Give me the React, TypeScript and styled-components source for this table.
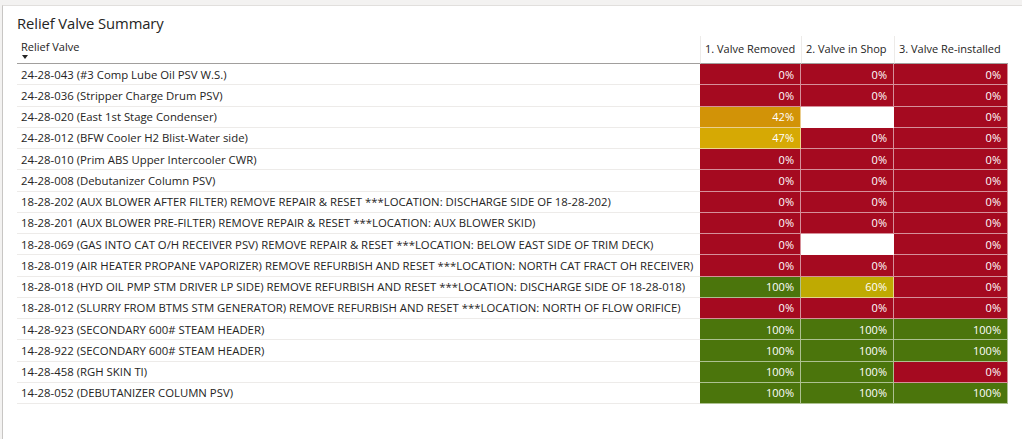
import { Fragment } from 'react';
import styled, { createGlobalStyle } from 'styled-components';

const GlobalStyle = createGlobalStyle`
  html, body {
    margin: 0;
    padding: 0;
    background: #f3f2f1;
  }
  body {
    font-family: 'Open Sans', 'Noto Sans', sans-serif;
    color: #252423;
  }
`;

const Page = styled.div`
  width: 1022px;
  height: 439px;
  padding: 5px 0 0 2px;
  box-sizing: border-box;
  overflow: hidden;
`;

const Visual = styled.div`
  height: 100%;
  background: #fff;
  border-top: 1px solid #e1dfdd;
  border-left: 1px solid #c8c6c4;
  padding: 7px 0 0 14px;
  box-sizing: border-box;
`;

const Title = styled.h1`
  margin: 0;
  font-size: 14.8px;
  font-weight: 400;
  line-height: 20px;
  color: #252423;
  letter-spacing: -0.1px;
`;

const Table = styled.div`
  margin-top: 3px;
  display: grid;
  grid-template-columns: 683px 101px 93px 114px;
  font-size: 11px;
`;

const HeaderCell = styled.div<{ $first?: boolean }>`
  height: 28px;
  box-sizing: border-box;
  border-bottom: 1px solid #a19f9d;
  border-left: ${({ $first }) => ($first ? 'none' : '1px solid #edebe9')};
  padding: ${({ $first }) => ($first ? '3px 0 0 4px' : '5px 0 0 4px')};
  white-space: nowrap;
  color: #252423;
  line-height: 15px;
`;

const SortArrow = styled.div`
  width: 0;
  height: 0;
  margin: 1px 0 0 1px;
  border-left: 3.5px solid transparent;
  border-right: 3.5px solid transparent;
  border-top: 4px solid #252423;
`;

const LabelCell = styled.div`
  height: 21.25px;
  box-sizing: border-box;
  border-bottom: 1px solid #edebe9;
  padding: 0 0 0 4px;
  display: flex;
  align-items: center;
  white-space: nowrap;
  overflow: hidden;
  font-size: 11.35px;
`;

const ValueCell = styled.div<{ $bg: string }>`
  height: 21.25px;
  box-sizing: border-box;
  background: ${({ $bg }) => $bg};
  border-right: 1px solid rgba(255, 255, 255, 0.55);
  border-bottom: 1px solid rgba(255, 255, 255, 0.55);
  padding-right: 6px;
  display: flex;
  align-items: center;
  justify-content: flex-end;
  color: #fff;
`;

const RED = '#a50a20';
const GREEN = '#4b750c';

type Val = { v: string; c: string } | null;

const r: Val = { v: '0%', c: RED };
const g: Val = { v: '100%', c: GREEN };

const rows: { label: string; vals: Val[] }[] = [
  { label: '24-28-043 (#3 Comp Lube Oil PSV W.S.)', vals: [r, r, r] },
  { label: '24-28-036 (Stripper Charge Drum PSV)', vals: [r, r, r] },
  { label: '24-28-020 (East 1st Stage Condenser)', vals: [{ v: '42%', c: '#d29307' }, null, r] },
  { label: '24-28-012 (BFW Cooler H2 Blist-Water side)', vals: [{ v: '47%', c: '#d6a904' }, r, r] },
  { label: '24-28-010 (Prim ABS Upper Intercooler CWR)', vals: [r, r, r] },
  { label: '24-28-008 (Debutanizer Column PSV)', vals: [r, r, r] },
  {
    label:
      '18-28-202 (AUX BLOWER AFTER FILTER) REMOVE REPAIR & RESET ***LOCATION: DISCHARGE SIDE OF 18-28-202)',
    vals: [r, r, r],
  },
  {
    label: '18-28-201 (AUX BLOWER PRE-FILTER) REMOVE REPAIR & RESET ***LOCATION: AUX BLOWER SKID)',
    vals: [r, r, r],
  },
  {
    label:
      '18-28-069 (GAS INTO CAT O/H RECEIVER PSV) REMOVE REPAIR & RESET ***LOCATION: BELOW EAST SIDE OF TRIM DECK)',
    vals: [r, null, r],
  },
  {
    label:
      '18-28-019 (AIR HEATER PROPANE VAPORIZER) REMOVE REFURBISH AND RESET ***LOCATION: NORTH CAT FRACT OH RECEIVER)',
    vals: [r, r, r],
  },
  {
    label:
      '18-28-018 (HYD OIL PMP STM DRIVER LP SIDE) REMOVE REFURBISH AND RESET ***LOCATION: DISCHARGE SIDE OF 18-28-018)',
    vals: [g, { v: '60%', c: '#bfaa02' }, r],
  },
  {
    label:
      '18-28-012 (SLURRY FROM BTMS STM GENERATOR) REMOVE REFURBISH AND RESET ***LOCATION: NORTH OF FLOW ORIFICE)',
    vals: [r, r, r],
  },
  { label: '14-28-923 (SECONDARY 600# STEAM HEADER)', vals: [g, g, g] },
  { label: '14-28-922 (SECONDARY 600# STEAM HEADER)', vals: [g, g, g] },
  { label: '14-28-458 (RGH SKIN TI)', vals: [g, g, r] },
  { label: '14-28-052 (DEBUTANIZER COLUMN PSV)', vals: [g, g, g] },
];

const columns = ['1. Valve Removed', '2. Valve in Shop', '3. Valve Re-installed'];

export default function App() {
  return (
    <Page>
      <GlobalStyle />
      <Visual>
        <Title>Relief Valve Summary</Title>
        <Table>
          <HeaderCell $first>
            Relief Valve
            <SortArrow />
          </HeaderCell>
          {columns.map((c) => (
            <HeaderCell key={c}>{c}</HeaderCell>
          ))}
          {rows.map((row) => (
            <Fragment key={row.label}>
              <LabelCell>{row.label}</LabelCell>
              {row.vals.map((val, i) => (
                <ValueCell key={i} $bg={val ? val.c : '#fff'}>
                  {val?.v}
                </ValueCell>
              ))}
            </Fragment>
          ))}
        </Table>
      </Visual>
    </Page>
  );
}
